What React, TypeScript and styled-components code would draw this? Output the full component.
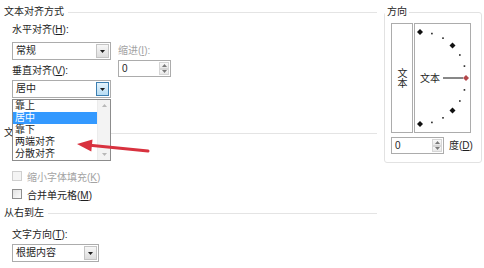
import React from "react";
import styled, { createGlobalStyle } from "styled-components";

const GlobalStyle = createGlobalStyle`
  html, body {
    margin: 0;
    padding: 0;
    background: #ffffff;
  }
  body {
    font-family: "Liberation Sans", "Noto Sans CJK SC", sans-serif;
    font-size: 10px;
    color: #1e1e1e;
  }
`;

const DownTriangle = ({ color = "#1e1e1e" }: { color?: string }) => (
  <svg width="5" height="3" viewBox="0 0 5 3">
    <path d="M0 0H5L2.5 3Z" fill={color} />
  </svg>
);

const UpTriangle = ({ color = "#1e1e1e" }: { color?: string }) => (
  <svg width="5" height="3" viewBox="0 0 5 3">
    <path d="M0 3H5L2.5 0Z" fill={color} />
  </svg>
);

const Select = ({
  value,
  width,
  open,
}: {
  value: string;
  width: number;
  open?: boolean;
}) => (
  <SelectBox $w={width}>
    <SelectValue>{value}</SelectValue>
    <DropButton $open={open}>
      <DownTriangle />
    </DropButton>
  </SelectBox>
);

const NumberInput = ({ value }: { value: string }) => (
  <NumberBox>
    <NumberValue>{value}</NumberValue>
    <Spinner>
      <SpinButton>
        <UpTriangle color="#7a7a7a" />
      </SpinButton>
      <SpinButton>
        <DownTriangle color="#7a7a7a" />
      </SpinButton>
    </Spinner>
  </NumberBox>
);

const options = ["靠上", "居中", "靠下", "两端对齐", "分散对齐"];

const angles = [90, 75, 60, 45, 30, 15, 0, -15, -30, -45, -60, -75, -90];

const OrientationDial = () => {
  const cx = 5;
  const cy = 54;
  const r = 46;
  return (
    <svg width="55" height="108" viewBox="0 0 55 108">
      {angles.map((a) => {
        const rad = (a * Math.PI) / 180;
        const x = cx + r * Math.cos(rad);
        const y = cy - r * Math.sin(rad);
        if (a % 45 === 0) {
          return (
            <path
              key={a}
              d={`M${x - 3} ${y}L${x} ${y - 3}L${x + 3} ${y}L${x} ${y + 3}Z`}
              fill={a === 0 ? "#b3474a" : "#111"}
            />
          );
        }
        return <rect key={a} x={x - 0.8} y={y - 0.8} width="1.6" height="1.6" fill="#222" />;
      })}
      <text x="5" y="58" fontSize="10" fill="#1e1e1e" fontFamily="Noto Sans CJK SC, sans-serif">
        文本
      </text>
      <line x1="28" y1="54" x2="48" y2="54" stroke="#111" strokeWidth="1" />
    </svg>
  );
};

export default function App() {
  return (
    <>
      <GlobalStyle />
      <Dialog>
        <LeftPane>
          <SectionHead>文本对齐方式</SectionHead>
          <Section>
            <Label $mt={6}>
              水平对齐(<u>H</u>):
            </Label>
            <Row $mt={6}>
              <Select value="常规" width={99} />
              <Label $muted $ml={7}>
                缩进(<u>I</u>):
              </Label>
            </Row>
            <Row $end>
              <Label $w={106}>
                垂直对齐(<u>V</u>):
              </Label>
              <NumberInput value="0" />
            </Row>
            <SelectWrap $mt={3}>
              <Select value="居中" width={99} open />
              <OptionList>
                <OptionItems>
                  {options.map((o) => (
                    <OptionItem key={o} $active={o === "居中"}>
                      {o}
                    </OptionItem>
                  ))}
                </OptionItems>
                <ScrollTrack>
                  <UpTriangle color="#b8b8b8" />
                  <DownTriangle color="#b8b8b8" />
                </ScrollTrack>
              </OptionList>
            </SelectWrap>
          </Section>

          <SectionHead $mt={29}>文本控制</SectionHead>
          <Section>
            <CheckRow $mt={28} $disabled>
              <CheckBox $disabled />
              <span>
                缩小字体填充(<u>K</u>)
              </span>
            </CheckRow>
            <CheckRow>
              <CheckBox />
              <span>
                合并单元格(<u>M</u>)
              </span>
            </CheckRow>
          </Section>

          <SectionHead $mt={4}>从右到左</SectionHead>
          <Section>
            <Label $mt={10}>
              文字方向(<u>T</u>):
            </Label>
            <SelectWrap $mt={3}>
              <Select value="根据内容" width={87} />
            </SelectWrap>
          </Section>

          <Callout width="78" height="20" viewBox="0 0 78 20">
            <line x1="16" y1="9.3" x2="74" y2="15" stroke="#d8323f" strokeWidth="3" strokeLinecap="round" />
            <path d="M3 8L17.3 15.5L18.5 3.5Z" fill="#d8323f" />
          </Callout>
        </LeftPane>

        <RightPane>
          <OrientGroup>
            <GroupLegend>方向</GroupLegend>
            <DialRow>
              <VerticalTextBox>
                <VerticalText>文本</VerticalText>
              </VerticalTextBox>
              <DialBox>
                <OrientationDial />
              </DialBox>
            </DialRow>
            <Row $mt={4}>
              <NumberInput value="0" />
              <Label $ml={5}>
                度(<u>D</u>)
              </Label>
            </Row>
          </OrientGroup>
        </RightPane>
      </Dialog>
    </>
  );
}

const Dialog = styled.div`
  display: flex;
  width: 484px;
  height: 268px;
  overflow: hidden;
`;

const LeftPane = styled.div`
  position: relative;
  width: 380px;
  padding: 6px 3px 0 4px;
  box-sizing: border-box;
  display: flex;
  flex-direction: column;
`;

const SectionHead = styled.div<{ $mt?: number }>`
  display: flex;
  align-items: center;
  height: 12px;
  line-height: 12px;
  margin-top: ${({ $mt }) => $mt ?? 0}px;
  white-space: nowrap;

  &::after {
    content: "";
    flex: 1;
    height: 1px;
    margin-left: 4px;
    background: #e4e4e4;
  }
`;

const Section = styled.div`
  display: flex;
  flex-direction: column;
  padding-left: 8px;
`;

const Label = styled.span<{ $mt?: number; $ml?: number; $w?: number; $muted?: boolean }>`
  display: block;
  height: 12px;
  line-height: 12px;
  white-space: nowrap;
  margin-top: ${({ $mt }) => $mt ?? 0}px;
  margin-left: ${({ $ml }) => $ml ?? 0}px;
  width: ${({ $w }) => ($w ? `${$w}px` : "auto")};
  color: ${({ $muted }) => ($muted ? "#a3a3a3" : "#1e1e1e")};
`;

const Row = styled.div<{ $mt?: number; $end?: boolean }>`
  display: flex;
  align-items: ${({ $end }) => ($end ? "flex-end" : "center")};
  margin-top: ${({ $mt }) => $mt ?? 0}px;
`;

const SelectWrap = styled.div<{ $mt?: number }>`
  position: relative;
  margin-top: ${({ $mt }) => $mt ?? 0}px;
`;

const SelectBox = styled.div<{ $w: number }>`
  display: flex;
  width: ${({ $w }) => $w}px;
  height: 18px;
  box-sizing: border-box;
  border: 1px solid #acacac;
  background: #fff;
`;

const SelectValue = styled.span`
  flex: 1;
  padding-left: 3px;
  line-height: 16px;
  white-space: nowrap;
`;

const DropButton = styled.span<{ $open?: boolean }>`
  display: flex;
  align-items: center;
  justify-content: center;
  width: 13px;
  margin: 1px;
  box-sizing: border-box;
  border: 1px solid ${({ $open }) => ($open ? "#3c7fb1" : "#c4c4c4")};
  background: ${({ $open }) =>
    $open ? "linear-gradient(#e4f3fc, #b7dcf3)" : "linear-gradient(#f7f7f7, #dddddd)"};
`;

const NumberBox = styled.div`
  display: flex;
  width: 53px;
  height: 17px;
  box-sizing: border-box;
  border: 1px solid #acacac;
  background: #fff;
`;

const NumberValue = styled.span`
  flex: 1;
  padding-left: 3px;
  line-height: 15px;
`;

const Spinner = styled.span`
  display: flex;
  flex-direction: column;
  width: 10px;
  margin: 1px;
`;

const SpinButton = styled.span`
  flex: 1;
  display: flex;
  align-items: center;
  justify-content: center;
  border: 1px solid #d6d6d6;
  background: linear-gradient(#f9f9f9, #e8e8e8);
`;

const OptionList = styled.div`
  position: absolute;
  top: 19px;
  left: 0;
  z-index: 2;
  display: flex;
  width: 99px;
  box-sizing: border-box;
  border: 1px solid #8c8c8c;
  background: #fff;
`;

const OptionItems = styled.div`
  flex: 1;
  display: flex;
  flex-direction: column;
`;

const OptionItem = styled.div<{ $active?: boolean }>`
  height: 12px;
  line-height: 12px;
  padding-left: 2px;
  white-space: nowrap;
  background: ${({ $active }) => ($active ? "#3399ff" : "transparent")};
  color: ${({ $active }) => ($active ? "#ffffff" : "#1e1e1e")};
`;

const ScrollTrack = styled.div`
  display: flex;
  flex-direction: column;
  align-items: center;
  justify-content: space-between;
  width: 13px;
  padding: 4px 0;
  box-sizing: border-box;
  background: #f3f3f3;
  border-left: 1px solid #ececec;
`;

const CheckRow = styled.div<{ $mt?: number; $disabled?: boolean }>`
  display: flex;
  align-items: center;
  gap: 5px;
  height: 18px;
  white-space: nowrap;
  margin-top: ${({ $mt }) => $mt ?? 0}px;
  color: ${({ $disabled }) => ($disabled ? "#a3a3a3" : "#1e1e1e")};
`;

const CheckBox = styled.span<{ $disabled?: boolean }>`
  width: 10px;
  height: 10px;
  box-sizing: border-box;
  border: 1px solid ${({ $disabled }) => ($disabled ? "#cfcfcf" : "#8e8e8e")};
  background: ${({ $disabled }) =>
    $disabled ? "#f4f4f4" : "linear-gradient(135deg, #e2e2e2, #fbfbfb)"};
`;

const Callout = styled.svg`
  position: absolute;
  left: 74px;
  top: 136px;
  z-index: 3;
  overflow: visible;
`;

const RightPane = styled.div`
  padding: 6px 0 0 4px;
`;

const OrientGroup = styled.fieldset`
  margin: 0;
  width: 98px;
  box-sizing: border-box;
  padding: 5px 6px 8px 6px;
  border: 1px solid #e2e2e2;
  border-radius: 3px;
`;

const GroupLegend = styled.legend`
  padding: 0 2px;
  margin-left: -6px;
  height: 12px;
  line-height: 12px;
  font-size: 10px;
`;

const DialRow = styled.div`
  display: flex;
  gap: 1px;
`;

const VerticalTextBox = styled.div`
  display: flex;
  align-items: center;
  justify-content: center;
  width: 22px;
  height: 110px;
  box-sizing: border-box;
  border: 1px solid #acacac;
`;

const VerticalText = styled.span`
  writing-mode: vertical-lr;
  text-orientation: upright;
  line-height: 10px;
  font-family: "Noto Sans CJK SC", sans-serif;
`;

const DialBox = styled.div`
  width: 57px;
  height: 110px;
  box-sizing: border-box;
  border: 1px solid #acacac;
`;
